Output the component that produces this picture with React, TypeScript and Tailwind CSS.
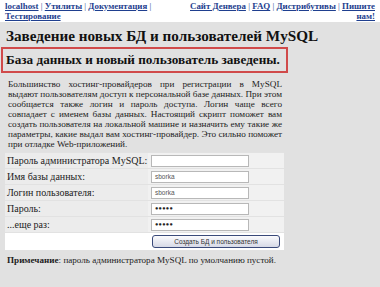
import React from "react";

const serif = { fontFamily: '"Liberation Serif", "Times New Roman", serif' };
const sans = { fontFamily: '"Liberation Sans", Arial, sans-serif' };

function L({ children }: { children: React.ReactNode }) {
  return <a className="text-[#1f3f8f] underline font-bold">{children}</a>;
}

function Row({ label, value, pw }: { label: string; value?: string; pw?: boolean }) {
  return (
    <div className="flex h-[16px] border-t border-[#e2e2e2] bg-[#ececec]">
      <div className="w-[143px] pl-[2px] flex items-center text-[10px] text-[#222] whitespace-nowrap">{label}</div>
      <div className="flex-1 flex items-center pl-[3px] bg-[#f1f1f1]">
        <div
          className="w-[98px] h-[12px] bg-white border border-[#b8b8b8] flex items-center pl-[3px] text-[6.5px] text-[#555]"
          style={sans}
        >
          {pw ? <span className="text-[5.5px] tracking-[0.3px] text-[#222]">●●●●●</span> : value}
        </div>
      </div>
    </div>
  );
}

const lines = [
  "Большинство хостинг-провайдеров при регистрации в MySQL",
  "выдают пользователям доступ к персональной базе данных. При этом",
  "сообщается также логин и пароль доступа. Логин чаще всего",
  "совпадает с именем базы данных. Настоящий скрипт поможет вам",
  "создать пользователя на локальной машине и назначить ему такие же",
  "параметры, какие выдал вам хостинг-провайдер. Это сильно поможет",
];

export default function App() {
  return (
    <div className="w-[380px] h-[287px] bg-[#e1e1e1] overflow-hidden" style={serif}>
      <div className="bg-white h-[22px] flex justify-between px-[5px] pt-[1px] text-[8.9px] leading-[10px] text-[#1f3f8f]">
        <div className="w-[160px] whitespace-nowrap">
          <L>localhost</L> | <L>Утилиты</L> | <L>Документация</L> |<br />
          <L>Тестирование</L>
        </div>
        <div className="w-[200px] text-right whitespace-nowrap">
          <L>Сайт Денвера</L> | <L>FAQ</L> | <L>Дистрибутивы</L> | <L>Пишите</L>
          <br />
          <L>нам!</L>
        </div>
      </div>
      <div className="w-[290px]">
        <h1 className="pl-[6px] pt-[5px] text-[15.2px] leading-[17px] font-bold text-[#111] whitespace-nowrap">
          Заведение новых БД и пользователей MySQL
        </h1>
        <div className="mt-[3px] ml-[1px] w-[287px] h-[26px] border-2 border-[#d04a4a] flex items-center pl-[3px] text-[13.2px] font-bold text-[#111] whitespace-nowrap">
          База данных и новый пользователь заведены.
        </div>
        <div className="mt-[6px] ml-[8px] w-[274px] text-[9.2px] leading-[10px] text-[#222]">
          {lines.map((l) => (
            <div key={l} className="text-justify [text-align-last:justify] whitespace-nowrap">
              {l}
            </div>
          ))}
          <div>при отладке Web-приложений.</div>
        </div>
        <div className="mt-[3px] ml-[5px] w-[279px]">
          <Row label="Пароль администратора MySQL:" />
          <Row label="Имя базы данных:" value="sborka" />
          <Row label="Логин пользователя:" value="sborka" />
          <Row label="Пароль:" pw />
          <Row label="...еще раз:" pw />
          <div className="flex h-[18px] bg-white border-t border-[#e2e2e2]">
            <div className="w-[143px]" />
            <div className="flex-1 flex items-center pl-[4px]">
              <div
                className="w-[128px] h-[13px] rounded-[3px] border border-[#3a4a7a] bg-gradient-to-b from-[#fbfbfd] to-[#d6d9e6] flex items-center justify-center text-[6.5px] text-[#333]"
                style={sans}
              >
                Создать БД и пользователя
              </div>
            </div>
          </div>
        </div>
        <p className="mt-[4px] ml-[7px] text-[9.1px] text-[#222] whitespace-nowrap">
          <b>Примечание</b>: пароль администратора MySQL по умолчанию пустой.
        </p>
      </div>
    </div>
  );
}
